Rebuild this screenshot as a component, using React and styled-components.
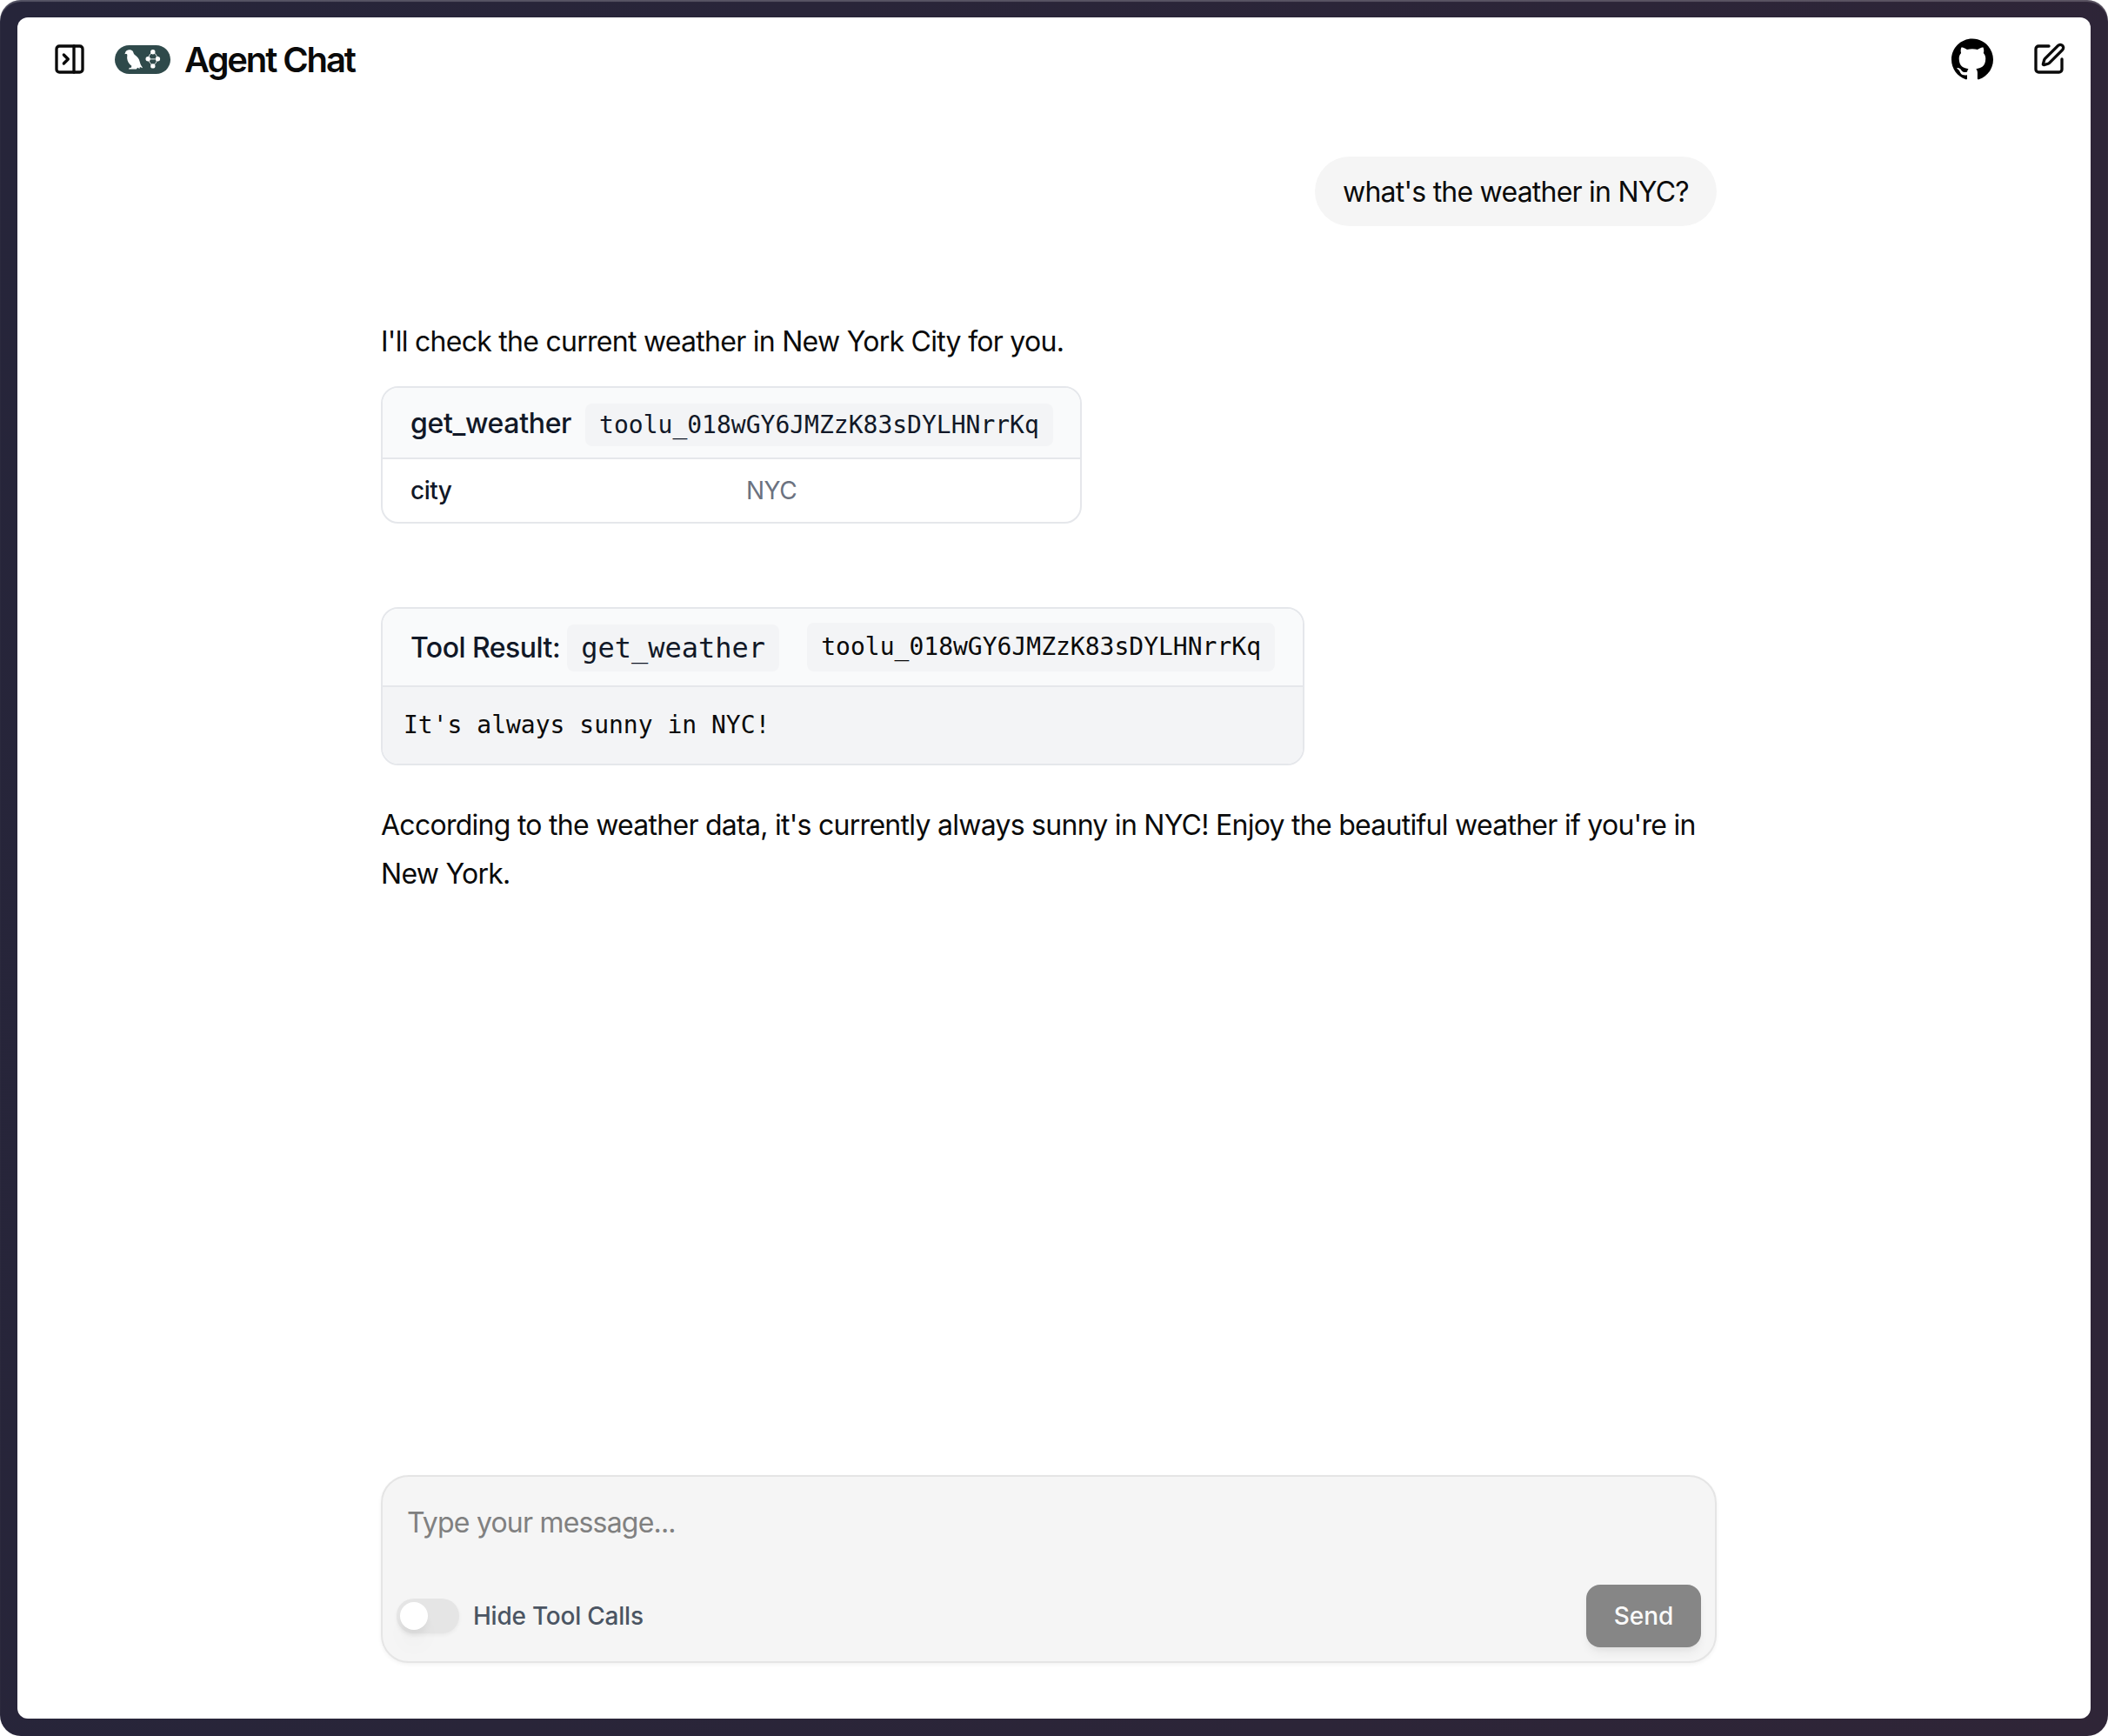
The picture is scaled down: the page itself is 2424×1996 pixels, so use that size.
import React from "react";
import styled, { createGlobalStyle } from "styled-components";
import { PanelRightClose, SquarePen } from "lucide-react";

const SANS = `Inter, "Liberation Sans", sans-serif`;
const MONO = `"DejaVu Sans Mono", "Liberation Mono", monospace`;

const GlobalStyle = createGlobalStyle`
  *, *::before, *::after { box-sizing: border-box; }
  html, body, #root { margin: 0; height: 100%; }
  body { background: #fff; color: #0a0a0a; font-family: ${SANS}; font-size: 32px; }
`;

const Frame = styled.div`
  display: flex;
  height: 100vh;
  padding: 20px;
  border-radius: 24px;
  background: linear-gradient(100deg, #26253a 0%, #2f2537 100%);
  box-shadow: inset 0 2px 1px rgba(255, 255, 255, 0.22);
`;

const Window = styled.div`
  flex: 1;
  display: flex;
  flex-direction: column;
  background: #fff;
  border-radius: 12px;
  overflow: hidden;
`;

const Header = styled.header`
  display: flex;
  align-items: center;
  justify-content: space-between;
  height: 96px;
  padding: 0 28px 0 40px;
`;

const HeaderGroup = styled.div`
  display: flex;
  align-items: center;
  gap: ${(p) => p.$gap}px;
`;

const Brand = styled.div`
  display: flex;
  align-items: center;
  gap: 15px;
`;

const Title = styled.h1`
  margin: 0;
  padding-top: 2px;
  font-size: 40px;
  line-height: 56px;
  font-weight: 600;
  letter-spacing: -2.1px;
`;

const IconButton = styled.button`
  display: flex;
  padding: 0;
  border: 0;
  background: none;
  color: #0a0a0a;
`;

const Column = styled.main`
  flex: 1;
  display: flex;
  flex-direction: column;
  width: 1536px;
  margin-left: 418px;
  padding: 64px 0;
`;

const Bubble = styled.div`
  align-self: flex-end;
  width: 462px;
  padding: 17px 32px 15px;
  border-radius: 40px;
  background: #f5f5f5;
  line-height: 48px;
  letter-spacing: -0.77px;
  white-space: nowrap;
`;

const Paragraph = styled.p`
  margin: ${(p) => p.$top}px 0 0;
  line-height: 56px;
  letter-spacing: -0.73px;
`;

const Card = styled.section`
  align-self: flex-start;
  width: ${(p) => p.$width}px;
  margin-top: ${(p) => p.$top}px;
  border: 2px solid #e5e7eb;
  border-radius: 20px;
  overflow: hidden;
`;

const CardHeader = styled.div`
  display: flex;
  align-items: center;
  justify-content: space-between;
  height: ${(p) => p.$height}px;
  padding: 2px 32px 0;
  border-bottom: 2px solid #e5e7eb;
  background: #f9fafb;
`;

const CardTitle = styled.h3`
  margin: 0;
  font-size: 32px;
  line-height: 48px;
  font-weight: 500;
  letter-spacing: ${(p) => p.$tracking}px;
  color: #111827;
  white-space: nowrap;
`;

const Code = styled.code`
  margin-left: ${(p) => p.$left || 0}px;
  padding: 8px 16px;
  border-radius: 8px;
  background: #f3f4f6;
  font-family: ${MONO};
  font-size: ${(p) => p.$size || 28}px;
  line-height: 40px;
  font-weight: 400;
  letter-spacing: 0;
`;

const BlockCode = styled(Code)`
  display: block;
  margin-bottom: 2px;
`;

const ArgRow = styled.div`
  display: grid;
  grid-template-columns: 386px 1fr;
  padding: 16px 32px;
  font-size: 28px;
  line-height: 40px;
  letter-spacing: -0.5px;
`;

const ArgName = styled.span`
  font-weight: 500;
  color: #111827;
`;

const ArgValue = styled.span`
  color: #6b7280;
`;

const Output = styled.div`
  padding: 24px;
  background: #f3f4f6;
  font-family: ${MONO};
  font-size: 28px;
  line-height: 40px;
`;

const Composer = styled.form`
  display: flex;
  flex-direction: column;
  justify-content: space-between;
  height: 216px;
  margin-top: auto;
  padding: 29px 16px 16px;
  border: 2px solid #e5e5e5;
  border-radius: 32px;
  background: #f5f5f5;
  box-shadow: 0 2px 4px rgba(0, 0, 0, 0.05);
`;

const Placeholder = styled.div`
  padding-left: 12px;
  line-height: 48px;
  letter-spacing: -0.8px;
  color: #808080;
`;

const Actions = styled.div`
  display: flex;
  align-items: center;
  justify-content: space-between;
`;

const ToggleLabel = styled.label`
  display: flex;
  align-items: center;
  gap: 16px;
  font-size: 28px;
  line-height: 40px;
  font-weight: 500;
  letter-spacing: -0.23px;
  color: #4b5563;
`;

const Track = styled.span`
  display: flex;
  width: 72px;
  height: 40px;
  padding: 4px;
  border-radius: 20px;
  background: #e5e5e5;
  box-shadow: 0 2px 4px rgba(0, 0, 0, 0.05);
`;

const Thumb = styled.span`
  width: 32px;
  height: 32px;
  border-radius: 50%;
  background: #fff;
  box-shadow: 0 20px 30px -6px rgba(0, 0, 0, 0.06), 0 8px 12px -4px rgba(0, 0, 0, 0.08);
`;

const SendButton = styled.button`
  width: 132px;
  height: 72px;
  padding: 0;
  border: 0;
  border-radius: 16px;
  background: #868686;
  color: #fafafa;
  font-family: ${SANS};
  font-size: 28px;
  font-weight: 500;
  box-shadow: 0 8px 12px -2px rgba(0, 0, 0, 0.06), 0 4px 8px -4px rgba(0, 0, 0, 0.06);
`;

const LogoSvg = styled.svg`
  display: block;
  margin-right: 1px;
`;

function GraphLogo() {
  return (
    <LogoSvg width="64" height="33" viewBox="0 0 64 33" fill="none">
      <rect width="64" height="33" rx="16.5" fill="#2f4a4b" />
      <path
        fill="#fff"
        d="M11.400 10.200C11.900 8.900 12.200 7.200 13.600 6.200C15.400 4.900 18.600 4.900 20.400 6.600C21.600 7.800 21.300 9.300 22.400 10.500C24.200 12.200 26.600 13.800 27.800 16.300C28.800 18.500 29 20.800 29.900 22.600C30.600 23.900 31.600 24.900 32 26.300L28.900 24.900L28.400 27.100L26.200 25.800L24.800 27.400H16C16.300 26.200 17.500 25.700 18.900 25.900L19.300 23.700C16.400 21.800 14.500 18.800 14.200 15.300C14 13.400 14.600 11.900 14.200 10.400C13.300 9.700 12.300 9.900 11.400 10.200Z"
      />
      <g stroke="#fff" strokeWidth="0.900" fill="none">
        <path d="M42.200 8.800Q39.600 10.800 38.800 14" />
        <path d="M45.300 8.800Q48 10.800 48.800 14" />
        <path d="M39.200 18Q40.400 20.800 42.400 22.400" />
        <path d="M48.400 18Q47.200 20.800 45.200 22.400" />
      </g>
      <path d="M41 15.800h5.500" stroke="#c3cdcd" strokeWidth="1.300" />
      <g fill="#fff">
        <circle cx="43.800" cy="7.700" r="2.700" />
        <circle cx="38.200" cy="15.800" r="2.700" />
        <circle cx="49.400" cy="15.800" r="2.700" />
        <circle cx="43.800" cy="23.900" r="2.700" />
      </g>
    </LogoSvg>
  );
}

function GitHubMark() {
  return (
    <svg width="48" height="48" viewBox="0 0 24 24" fill="#000">
      <path d="M12 .297c-6.63 0-12 5.373-12 12 0 5.303 3.438 9.8 8.205 11.385.6.113.82-.258.82-.577 0-.285-.01-1.04-.015-2.04-3.338.724-4.042-1.61-4.042-1.61C4.422 18.07 3.633 17.7 3.633 17.7c-1.087-.744.084-.729.084-.729 1.205.084 1.838 1.236 1.838 1.236 1.07 1.835 2.809 1.305 3.495.998.108-.776.417-1.305.76-1.605-2.665-.3-5.466-1.332-5.466-5.93 0-1.31.465-2.38 1.235-3.22-.135-.303-.54-1.523.105-3.176 0 0 1.005-.322 3.3 1.23.96-.267 1.98-.399 3-.405 1.02.006 2.04.138 3 .405 2.28-1.552 3.285-1.23 3.285-1.23.645 1.653.24 2.873.12 3.176.765.84 1.23 1.91 1.23 3.22 0 4.61-2.805 5.625-5.475 5.92.42.36.81 1.096.81 2.22 0 1.606-.015 2.896-.015 3.286 0 .315.21.69.825.57C20.565 22.092 24 17.592 24 12.297c0-6.627-5.373-12-12-12" />
    </svg>
  );
}

const CALL_ID = "toolu_018wGY6JMZzK83sDYLHNrrKq";

export default function App() {
  return (
    <>
      <GlobalStyle />
      <Frame>
        <Window>
          <Header>
            <HeaderGroup $gap={32}>
              <IconButton type="button" aria-label="Open history">
                <PanelRightClose size={40} />
              </IconButton>
              <Brand>
                <GraphLogo />
                <Title>Agent Chat</Title>
              </Brand>
            </HeaderGroup>
            <HeaderGroup $gap={44}>
              <GitHubMark />
              <IconButton type="button" aria-label="New thread">
                <SquarePen size={40} />
              </IconButton>
            </HeaderGroup>
          </Header>
          <Column>
            <Bubble>what's the weather in NYC?</Bubble>
            <Paragraph $top={105}>I'll check the current weather in New York City for you.</Paragraph>
            <Card $width={806} $top={23}>
              <CardHeader $height={82}>
                <CardTitle $tracking={-0.35}>
                  get_weather
                  <Code $left={16}>{CALL_ID}</Code>
                </CardTitle>
              </CardHeader>
              <ArgRow>
                <ArgName>city</ArgName>
                <ArgValue>NYC</ArgValue>
              </ArgRow>
            </Card>
            <Card $width={1062} $top={96}>
              <CardHeader $height={90}>
                <CardTitle $tracking={-0.52}>
                  Tool Result: <Code $size={32}>get_weather</Code>
                </CardTitle>
                <BlockCode>{CALL_ID}</BlockCode>
              </CardHeader>
              <Output>It's always sunny in NYC!</Output>
            </Card>
            <Paragraph $top={41}>
              According to the weather data, it's currently always sunny in NYC! Enjoy the beautiful weather if you're in
              New York.
            </Paragraph>
            <Composer>
              <Placeholder>Type your message...</Placeholder>
              <Actions>
                <ToggleLabel>
                  <Track>
                    <Thumb />
                  </Track>
                  Hide Tool Calls
                </ToggleLabel>
                <SendButton type="button">Send</SendButton>
              </Actions>
            </Composer>
          </Column>
        </Window>
      </Frame>
    </>
  );
}
